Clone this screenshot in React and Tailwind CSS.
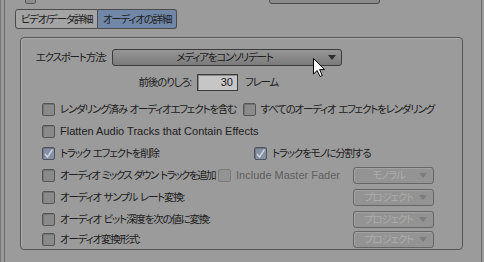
import React from 'react';

const Check = ({ checked = false, disabled = false }) => (
  <div
    className={
      'w-[13px] h-[13px] shrink-0 rounded-[2px] border flex items-center justify-center ' +
      (disabled
        ? 'border-[#7c7c7c] bg-[#939393]'
        : checked
          ? 'border-[#4e5462] bg-[#8790a0] shadow-[inset_1px_1px_0_#6d7585]'
          : 'border-[#555] bg-[#8a8a8a] shadow-[inset_1px_1px_0_#747474]')
    }
  >
    {checked && (
      <svg width="11" height="11" viewBox="0 0 11 11">
        <path d="M2 6 L4.5 9 L9.5 1.5" fill="none" stroke="#c9d5e8" strokeWidth="1.4" />
      </svg>
    )}
  </div>
);

const Arrow = ({ color }) => (
  <svg width="8" height="5" viewBox="0 0 8 5" className="shrink-0">
    <path d="M0 0 H8 L4 5 Z" fill={color} />
  </svg>
);

const DimSelect = ({ label }) => (
  <div className="ml-auto w-[81px] h-[17px] shrink-0 rounded-[3px] border border-[#666] bg-[#939393] shadow-[inset_1px_1px_0_#a2a2a2] flex items-center pr-[6px]">
    <span className="flex-1 text-center text-[#acacac] pl-[4px]">{label}</span>
    <Arrow color="#7c7c7c" />
  </div>
);

const Row = ({ children, h = 'h-[22px]' }) => (
  <div className={'flex items-center whitespace-nowrap ' + h}>{children}</div>
);

const Option = ({ label, checked }) => (
  <div className="flex items-center">
    <Check checked={checked} />
    <span className="ml-[5px]">{label}</span>
  </div>
);

export default function App() {
  return (
    <div className="w-[484px] h-[262px] bg-[#9b9b9b] relative overflow-hidden flex text-[10.5px] leading-none tracking-[-1.2px] [word-spacing:1px] whitespace-nowrap text-[#202020] font-['Liberation_Sans','Noto_Sans_CJK_JP',sans-serif] [font-feature-settings:'palt']">
      <div className="w-[1px] bg-[#767676]" />
      <div className="w-[3px]" />
      <div className="w-[478px] border-x border-[#6a6a6a] flex flex-col">
        {/* cut-off controls above */}
        <div className="h-[4px] overflow-hidden flex items-end">
          <div className="ml-[20px] w-[11px] h-[10px] shrink-0 rounded-[2px] border border-[#5a5a5a] bg-[#8e8e8e]" />
          <div className="ml-[233px] w-[111px] h-[10px] shrink-0 rounded-[3px] border border-[#4a4a4a] bg-[#8a8a8a]" />
        </div>

        {/* tabs */}
        <div className="mt-[5px] ml-[10px] flex h-[20px]">
          <div className="w-[83px] rounded-l-[3px] border border-[#4c4c4c] bg-[#a4a4a4] flex items-center justify-center">
            ビデオ/データ詳細
          </div>
          <div className="w-[79px] rounded-r-[3px] border border-l-0 border-[#4c4c4c] bg-[#7087a7] flex items-center justify-center">
            オーディオの詳細
          </div>
        </div>

        {/* panel */}
        <div className="mt-[8px] ml-[15px] w-[443px] h-[213px] rounded-[4px] border border-[#565656] shadow-[inset_1px_1px_0_#acacac] flex flex-col">
          <div className="mt-[11px] flex items-center h-[17px]">
            <span className="w-[85px] text-right">エクスポート方法:</span>
            <div className="ml-[6px] w-[230px] h-[17px] rounded-[3px] border border-[#3c3c3c] bg-linear-to-b from-[#969696] to-[#7b7b7b] flex items-center pr-[5px]">
              <span className="flex-1 text-center pl-[8px]">メディアをコンソリデート</span>
              <Arrow color="#2c2c2c" />
            </div>
          </div>

          <div className="mt-[8px] flex items-center h-[17px]">
            <span className="w-[170px] text-right">前後のりしろ:</span>
            <div className="ml-[6px] w-[41px] h-[17px] border border-[#3a3a3a] bg-[#c6c6c6] shadow-[inset_1px_1px_0_#8a8a8a] flex items-center justify-end pr-[4px] text-[11px] tracking-normal">
              30
            </div>
            <span className="ml-[7px]">フレーム</span>
          </div>

          <div className="mt-[7px] pl-[21px] pr-[28px] flex flex-col">
            <Row>
              <div className="w-[212px]">
                <Option label="レンダリング済み オーディオエフェクトを含む" />
              </div>
              <Option label="すべてのオーディオ エフェクトをレンダリング" />
            </Row>
            <Row>
              <div className="flex items-center">
                <Check />
                <span className="ml-[5px] text-[11px] tracking-normal [word-spacing:0px]">Flatten Audio Tracks that Contain Effects</span>
              </div>
            </Row>
            <Row>
              <div className="w-[212px]">
                <Option label="トラック エフェクトを削除" checked />
              </div>
              <Option label="トラックをモノに分割する" checked />
            </Row>
            <Row>
              <Check />
              <span className="ml-[5px] shrink-0 tracking-[-1.5px]">オーディオ ミックス ダウン トラックを追加</span>
              <div className="ml-[3px]">
                <Check disabled />
              </div>
              <span className="ml-[5px] text-[11px] text-[#5e5e5e] tracking-normal [word-spacing:0px]">Include Master Fader</span>
              <DimSelect label="モノラル" />
            </Row>
            <Row>
              <Option label="オーディオ サンプル レート変換:" />
              <DimSelect label="プロジェクト" />
            </Row>
            <Row>
              <Option label="オーディオ ビット深度を次の値に変換:" />
              <DimSelect label="プロジェクト" />
            </Row>
            <Row h="h-[19px]">
              <Option label="オーディオ変換形式:" />
              <DimSelect label="プロジェクト" />
            </Row>
          </div>
        </div>
      </div>

      {/* mouse pointer */}
      <svg className="absolute left-[313px] top-[58px]" width="13" height="20" viewBox="0 0 13 20">
        <path d="M0.5 0.5 L0.5 16 L4.2 12.5 L7 18.5 L9.3 17.5 L6.6 11.6 L11.5 11.6 Z" fill="#fff" stroke="#000" strokeWidth="1" />
      </svg>
    </div>
  );
}
